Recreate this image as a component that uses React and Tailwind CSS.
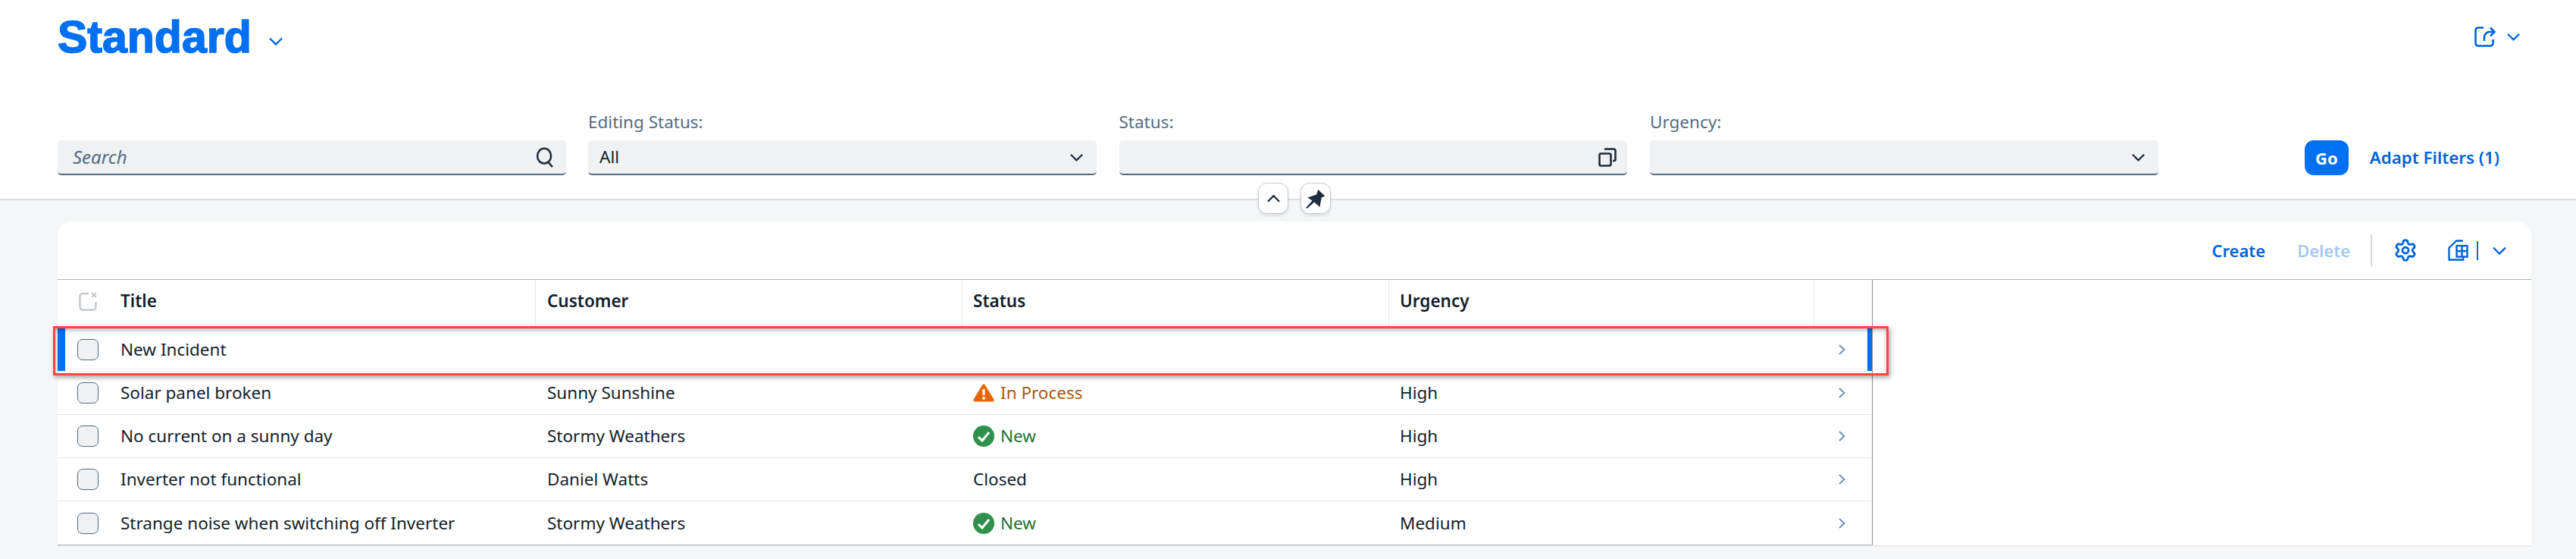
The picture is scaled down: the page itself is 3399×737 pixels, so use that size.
import React from 'react';
import { Settings } from 'lucide-react';

const rows = [
    { title: 'New Incident', customer: '', status: null, urgency: '' },
    { title: 'Solar panel broken', customer: 'Sunny Sunshine', status: 'warn', urgency: 'High' },
    { title: 'No current on a sunny day', customer: 'Stormy Weathers', status: 'new', urgency: 'High' },
    { title: 'Inverter not functional', customer: 'Daniel Watts', status: 'closed', urgency: 'High' },
    { title: 'Strange noise when switching off Inverter', customer: 'Stormy Weathers', status: 'new', urgency: 'Medium' },
];

const columns = 'grid grid-cols-[68px_563px_563px_563px_561px_76px]';

// small stroke icons, all drawn to the size they have in the picture
const Chevron = ({ className = '', up = false }) => (
    <svg viewBox="0 0 18 11" className={className} fill="none" stroke="currentColor" strokeWidth="2.4">
        <path d={up ? 'M1 10 L9 2 L17 10' : 'M1 1.5 L9 9.5 L17 1.5'} />
    </svg>
);

const SearchIcon = () => (
    <svg viewBox="0 0 26 30" className="h-[27px] w-[24px] text-[#1d2d3e]" fill="none" stroke="currentColor" strokeWidth="2.8">
        <ellipse cx="12" cy="13" rx="10" ry="11" />
        <path d="M18 22 L24 29" />
    </svg>
);

const CopyIcon = () => (
    <svg viewBox="0 0 24 25" className="h-[25px] w-[24px] text-[#1d2d3e]" fill="none" stroke="currentColor" strokeWidth="2.6">
        <rect x="1.5" y="7.5" width="15" height="16" rx="2" />
        <path d="M8 1.5 H20 a2.5 2.5 0 0 1 2.5 2.5 V15 a2 2 0 0 1 -2 2 H19" />
    </svg>
);

const ShareIcon = () => (
    <svg viewBox="0 0 28 27" className="h-[27px] w-[28px] text-[#0064d9]" fill="none" stroke="currentColor" strokeWidth="2.6">
        <path d="M12 1.5 H5 a3.5 3.5 0 0 0 -3.5 3.5 V22 a3.5 3.5 0 0 0 3.5 3.5 H21 a3.5 3.5 0 0 0 3.5 -3.5 V17" />
        <path d="M13 19 V14 a7 7 0 0 1 7 -7 H26" />
        <path d="M21 1.5 L26.5 7 L21 12.5" />
    </svg>
);

const TableIcon = () => (
    <svg viewBox="0 0 27 28" className="h-[28px] w-[27px] text-[#0064d9]" fill="none" stroke="currentColor" strokeWidth="2.4">
        <path d="M20 1.5 H11 L1.5 11 V26.5 H20 V23" />
        <rect x="11.5" y="8" width="14" height="14.5" strokeWidth="2.4" />
        <path d="M18.5 8 V22.5 M11.5 15 H25.5" />
    </svg>
);

const PinIcon = () => (
    <svg viewBox="250 50 80 85" className="h-[28px] w-[27px] text-[#1d2d3e]" fill="currentColor">
        <path d="M298 56 L326 82 L312 88 L305 126 L283 106 L254 132 L250 128 L275 100 L256 88 L292 76 Z" />
    </svg>
);

const SelectAllIcon = () => (
    <svg viewBox="0 0 24 25" className="h-[25px] w-[24px] text-[#c4c8cc]" fill="none" stroke="currentColor" strokeWidth="2.4">
        <path d="M13 2 H5 a3.5 3.5 0 0 0 -3.5 3.5 V20 a3.5 3.5 0 0 0 3.5 3.5 H19 a3.5 3.5 0 0 0 3.5 -3.5 V13" />
        <path d="M17 1 L23 7 M23 1 L17 7" strokeWidth="2" />
    </svg>
);

const StatusCell = ({ status }) => {
    if (status === 'warn') {
        return (
            <span className="flex items-center gap-[8px] text-[#aa5808]">
                <svg viewBox="0 0 28 24" className="h-[24px] w-[28px]">
                    <path d="M14 0.5 a2 2 0 0 1 1.8 1 L27.4 20.6 a2 2 0 0 1 -1.7 3 H2.3 a2 2 0 0 1 -1.7 -3 L12.2 1.5 a2 2 0 0 1 1.8 -1 Z" fill="#e76500" />
                    <path d="M12.4 7 H15.6 V15 H12.4 Z" fill="#fff" />
                    <circle cx="14" cy="19" r="2" fill="#fff" />
                </svg>
                In Process
            </span>
        );
    }
    if (status === 'new') {
        return (
            <span className="flex items-center gap-[8px] text-[#256f3a]">
                <svg viewBox="0 0 28 28" className="h-[28px] w-[28px]">
                    <circle cx="14" cy="14" r="14" fill="#30914c" />
                    <path d="M7 15 L12 20 L21 9" fill="none" stroke="#fff" strokeWidth="3" />
                </svg>
                New
            </span>
        );
    }
    if (status === 'closed') return <span>Closed</span>;
    return null;
};

const FilterField = ({ label, value, icon, iconPad = 'pr-[18px]' }) => (
    <div className="flex w-[670.5px] flex-col">
        <label className="mb-[11px] h-[26px] text-[22.5px] leading-[26px] text-[#556b82]">{label}</label>
        <div className={`flex h-[46px] items-center justify-between rounded-[5px] border-b-2 border-[#556b82] bg-[#eff1f2] pl-[15px] ${iconPad} text-[22.5px] text-[#131e29]`}>
            <span>{value}</span>
            {icon}
        </div>
    </div>
);

const App = () => {
    return (
        <div className="relative flex h-[737px] w-[3399px] flex-col overflow-hidden bg-[#f5f6f7] font-['Noto_Sans','Open_Sans',sans-serif] text-[#131e29]">
            {/* Header with variant title and filter bar */}
            <div className="relative flex h-[264px] flex-col border-b-2 border-[#dcdee0] bg-white pl-[76px] pr-[74px]">
                <div className="flex h-[148px] items-start justify-between">
                    <div className="mt-[12px] flex items-center">
                        <span className="font-['Liberation_Sans',sans-serif] text-[59px] leading-[74px] font-bold text-[#0070f2] [-webkit-text-stroke:1.6px_#0070f2]">Standard</span>
                        <Chevron className="ml-[23px] mt-[10px] h-[11px] w-[18px] text-[#0064d9]" />
                    </div>
                    <div className="mt-[35px] flex items-center gap-[15px]">
                        <ShareIcon />
                        <Chevron className="h-[11px] w-[17px] text-[#0064d9]" />
                    </div>
                </div>
                <div className="flex items-end">
                    <div className="flex h-[46px] w-[671px] items-center justify-between rounded-[5px] border-b-2 border-[#556b82] bg-[#eff1f2] pl-[20px] pr-[16px]">
                        <span className="text-[24px] italic text-[#556b82]">Search</span>
                        <SearchIcon />
                    </div>
                    <div className="ml-[29px] flex gap-[30px]">
                        <FilterField label="Editing Status:" value="All" icon={<Chevron className="h-[11px] w-[17px] text-[#1d2d3e]" />} />
                        <FilterField label="Status:" value="" iconPad="pr-[14px]" icon={<CopyIcon />} />
                        <FilterField label="Urgency:" value="" icon={<Chevron className="h-[11px] w-[17px] text-[#1d2d3e]" />} />
                    </div>
                    <div className="ml-auto flex items-center">
                        <button className="h-[46px] w-[58px] rounded-[12px] bg-[#0070f2] text-[22px] font-bold text-white">Go</button>
                        <span className="ml-[28px] mr-[27px] text-[22.3px] font-semibold text-[#0064d9]">Adapt Filters (1)</span>
                    </div>
                </div>
                {/* collapse + pin handles sit on the header edge */}
                <div className="absolute left-[1660px] top-[241px] flex gap-[16px]">
                    <button className="flex h-[41px] w-[40px] items-center justify-center rounded-[12px] border border-[#c5cdd6] bg-white shadow-[0_2px_4px_rgba(0,0,0,0.12)]">
                        <Chevron up className="h-[11px] w-[17px] text-[#1d2d3e]" />
                    </button>
                    <button className="flex h-[41px] w-[40px] items-center justify-center rounded-[12px] border border-[#c5cdd6] bg-white shadow-[0_2px_4px_rgba(0,0,0,0.12)]">
                        <PinIcon />
                    </button>
                </div>
            </div>

            {/* Table card */}
            <div className="ml-[76px] mr-[59px] mt-[28px] flex flex-col overflow-hidden rounded-t-[18px] bg-white">
                <div className="flex h-[76px] items-center justify-end pr-[33px]">
                    <span className="text-[22px] font-semibold text-[#0064d9]">Create</span>
                    <span className="ml-[42px] text-[22px] font-semibold text-[#a6c8f2]">Delete</span>
                    <span className="ml-[27px] h-[42px] w-[2px] bg-[#d5d8db]" />
                    <Settings className="ml-[28px] h-[32px] w-[32px] text-[#0064d9]" strokeWidth={2.1} />
                    <span className="ml-[40px]"><TableIcon /></span>
                    <span className="ml-[11px] h-[25px] w-[2px] bg-[#0064d9]" />
                    <Chevron className="ml-[19px] h-[11px] w-[18px] text-[#0064d9]" />
                </div>
                <div className="border-y border-t-[#a8b3bd] border-b-[#e5e5e5]">
                    <div className="w-[2395px] border-b border-r border-b-[#a8b3bd] border-r-[#8c8f92]">
                        <div className={`${columns} h-[64px] text-[22.5px] font-semibold`}>
                            <div className="flex items-center pb-[8px] pl-[28px]"><SelectAllIcon /></div>
                            <div className="flex items-center border-r border-[#e5e5e5] pb-[8px] pl-[15px]">Title</div>
                            <div className="flex items-center border-r border-[#e5e5e5] pb-[8px] pl-[15px]">Customer</div>
                            <div className="flex items-center border-r border-[#e5e5e5] pb-[8px] pl-[14px]">Status</div>
                            <div className="flex items-center border-r border-[#e5e5e5] pb-[8px] pl-[14px]">Urgency</div>
                            <div />
                        </div>
                        {rows.map((row, index) => (
                            <div key={row.title} className={`${columns} relative h-[57px] text-[22.5px] ${index < rows.length - 1 ? 'border-b border-[#e5e5e5]' : ''}`}>
                                {index === 0 && <span className="absolute left-0 top-0 h-[56px] w-[10px] bg-[#0070f2]" />}
                                {index === 0 && <span className="absolute right-0 top-0 h-[56px] w-[6px] bg-[#0070f2]" />}
                                <div className="flex items-center pl-[26px]">
                                    <span className="h-[28px] w-[28px] rounded-[7px] border border-[#556b82] bg-[#eff1f2]" />
                                </div>
                                <div className="flex items-center pl-[15px]">{row.title}</div>
                                <div className="flex items-center pl-[15px]">{row.customer}</div>
                                <div className="flex items-center pl-[14px]"><StatusCell status={row.status} /></div>
                                <div className="flex items-center pl-[14px]">{row.urgency}</div>
                                <div className="flex items-center pl-[32px]">
                                    <svg viewBox="0 0 9 14" className="h-[14px] w-[9px] text-[#6a8caf]" fill="none" stroke="currentColor" strokeWidth="1.8">
                                        <path d="M1 1 L7.5 7 L1 13" />
                                    </svg>
                                </div>
                            </div>
                        ))}
                    </div>
                </div>
            </div>

            {/* red annotation frame over the new row */}
            <div className="absolute left-[70px] top-[430px] h-[65px] w-[2422px] border-[3px] border-[#ff4444] shadow-[2px_3px_6px_rgba(0,0,0,0.35),inset_0_3px_5px_rgba(0,0,0,0.25)]" />
        </div>
    );
};

export default App;
